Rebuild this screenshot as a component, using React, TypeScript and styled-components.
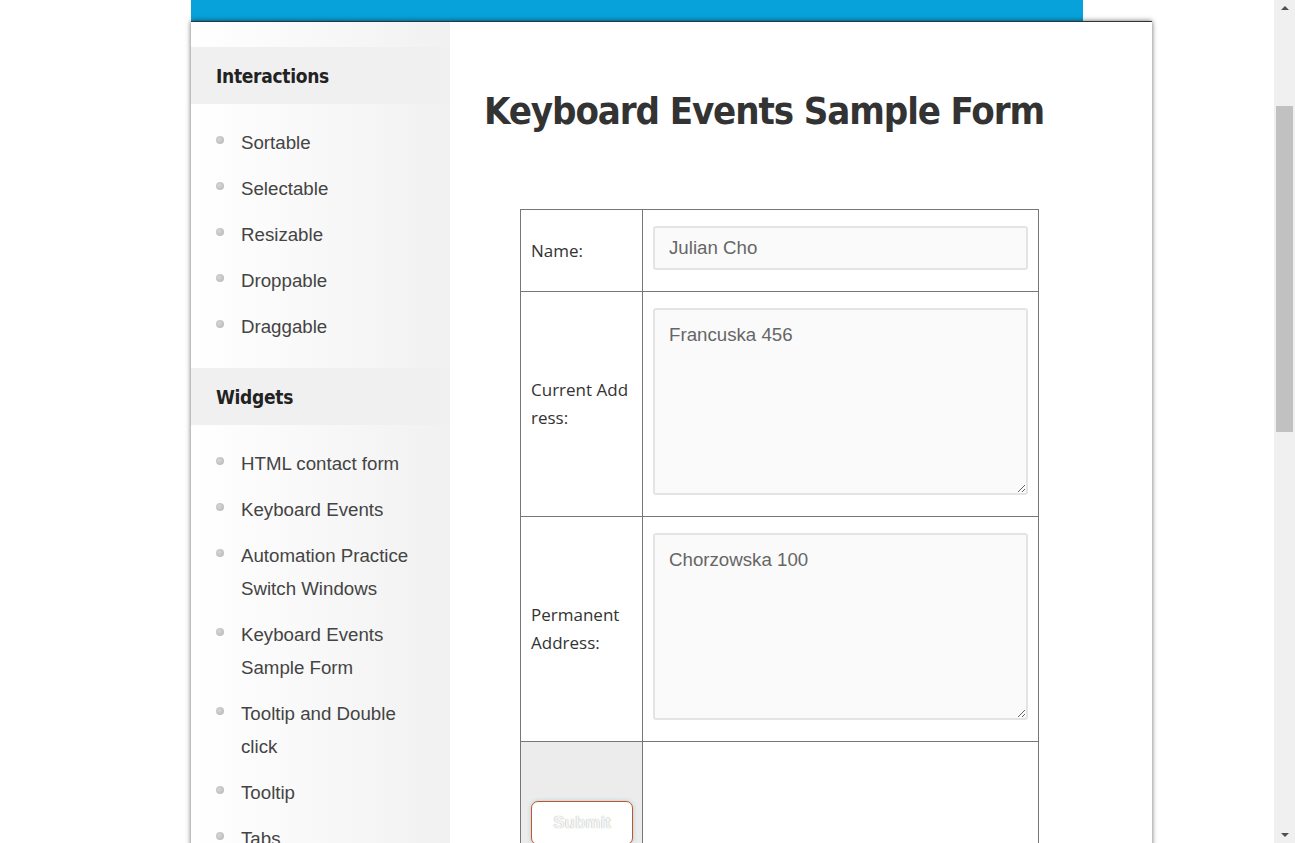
import React from "react";
import styled, { createGlobalStyle } from "styled-components";

const GlobalStyle = createGlobalStyle`
  html, body {
    margin: 0;
    padding: 0;
    height: 843px;
    overflow: hidden;
    background: #fff;
  }
`;

const interactions = ["Sortable", "Selectable", "Resizable", "Droppable", "Draggable"];
const widgets = [
  "HTML contact form",
  "Keyboard Events",
  "Automation Practice Switch Windows",
  "Keyboard Events Sample Form",
  "Tooltip and Double click",
  "Tooltip",
  "Tabs",
];

function SideSection({ title, items }: { title: string; items: string[] }) {
  return (
    <>
      <SideHeading>{title}</SideHeading>
      <SideList>
        {items.map((item) => (
          <SideItem key={item}>{item}</SideItem>
        ))}
      </SideList>
    </>
  );
}

function App() {
  return (
    <Screen>
      <GlobalStyle />
      <Page>
        <Wrapper>
          <TopBar />
          <MainBox>
            <Sidebar>
              <SideSection title="Interactions" items={interactions} />
              <SideSection title="Widgets" items={widgets} />
            </Sidebar>
            <Content>
              <Title>Keyboard Events Sample Form</Title>
              <FormTable>
                <tbody>
                  <Row $h={82}>
                    <LabelCell>Name:</LabelCell>
                    <FieldCell>
                      <TextInput type="text" defaultValue="Julian Cho" />
                    </FieldCell>
                  </Row>
                  <Row $h={225}>
                    <LabelCell>Current Address:</LabelCell>
                    <FieldCell>
                      <TextArea defaultValue="Francuska 456" />
                    </FieldCell>
                  </Row>
                  <Row $h={225}>
                    <LabelCell>Permanent Address:</LabelCell>
                    <FieldCell>
                      <TextArea defaultValue="Chorzowska 100" />
                    </FieldCell>
                  </Row>
                  <Row $h={130}>
                    <ButtonCell>
                      <SubmitButton type="button">Submit</SubmitButton>
                    </ButtonCell>
                    <FieldCell />
                  </Row>
                </tbody>
              </FormTable>
            </Content>
          </MainBox>
        </Wrapper>
      </Page>
      <ScrollBar>
        <Arrow $dir="up" />
        <Track>
          <Thumb />
        </Track>
        <Arrow $dir="down" />
      </ScrollBar>
    </Screen>
  );
}

export default App;

const Screen = styled.div`
  display: flex;
  width: 1295px;
  height: 843px;
  overflow: hidden;
`;

const Page = styled.div`
  flex: 1;
  height: 843px;
  overflow: hidden;
`;

const Wrapper = styled.div`
  margin-left: 191px;
  width: 961px;
`;

const TopBar = styled.div`
  width: 892px;
  height: 21px;
  background: #08a2da;
`;

const MainBox = styled.div`
  display: flex;
  background: #fff;
  border-top: 1px solid #333;
  box-shadow: 0 0 5px rgba(0, 0, 0, 0.6);
  min-height: 900px;
`;

const Sidebar = styled.div`
  width: 259px;
  flex-shrink: 0;
  padding-top: 25px;
  background: linear-gradient(to right, #fff 0%, #f1f1f1 100%);
`;

const headingFont = `
  font-family: "DejaVu Sans", sans-serif;
  font-stretch: condensed;
  font-weight: 700;
`;

const SideHeading = styled.div`
  height: 57px;
  display: flex;
  align-items: center;
  padding-left: 25px;
  background: #f0f0f0;
  color: #222;
  ${headingFont}
  font-size: 19px;
  letter-spacing: -0.3px;
`;

const SideList = styled.ul`
  list-style: none;
  margin: 0;
  padding: 22px 25px 12px 50px;
`;

const SideItem = styled.li`
  position: relative;
  font-family: "Liberation Sans", Arial, sans-serif;
  font-size: 18.7px;
  line-height: 33px;
  color: #444;
  margin-bottom: 13px;

  &::before {
    content: "";
    position: absolute;
    left: -25px;
    top: 10px;
    width: 8px;
    height: 8px;
    border-radius: 50%;
    background: radial-gradient(circle at 40% 40%, #d6d6d6, #b4b4b4);
  }
`;

const Content = styled.div`
  flex: 1;
  padding: 0 0 0 34px;
`;

const Title = styled.h1`
  margin: 64px 0 0;
  ${headingFont}
  font-size: 38px;
  letter-spacing: -1.1px;
  line-height: 50px;
  color: #333;
  white-space: nowrap;
`;

const FormTable = styled.table`
  margin: 73px 0 0 36px;
  width: 519px;
  border-collapse: collapse;
  table-layout: fixed;
`;

const Row = styled.tr<{ $h: number }>`
  height: ${(p) => p.$h}px;
`;

const LabelCell = styled.td`
  width: 101px;
  border: 1px solid #777;
  padding: 10px;
  vertical-align: middle;
  font-family: "Open Sans", sans-serif;
  font-size: 17px;
  line-height: 28px;
  color: #333;
  word-break: break-all;
`;

const FieldCell = styled.td`
  border: 1px solid #777;
  padding: 10px;
  vertical-align: middle;
`;

const ButtonCell = styled(LabelCell)`
  background: #ececec;
  vertical-align: top;
  padding-top: 59px;
`;

const fieldBase = `
  display: block;
  box-sizing: border-box;
  width: 375px;
  background: #fafafa;
  border: 2px solid #e4e4e4;
  border-radius: 3px;
  font-family: "Liberation Sans", Arial, sans-serif;
  font-size: 18.7px;
  color: #666;
  outline: none;
`;

const TextInput = styled.input`
  ${fieldBase}
  height: 44px;
  padding: 0 14px;
  margin-bottom: 6px;
`;

const TextArea = styled.textarea`
  ${fieldBase}
  height: 187px;
  padding: 14px 14px;
  line-height: 22px;
  resize: both;
  margin-bottom: 6px;
`;

const SubmitButton = styled.button`
  display: block;
  width: 102px;
  height: 44px;
  background: #fff;
  border: 1px solid #c4532a;
  border-radius: 7px;
  box-shadow: 0 0 4px rgba(90, 170, 190, 0.45);
  font-family: "Liberation Sans", Arial, sans-serif;
  font-weight: 700;
  font-size: 17px;
  color: #f4f4f4;
  text-shadow: 0 0 1px #9a9a9a;
  padding: 0;
`;

const ScrollBar = styled.div`
  width: 21px;
  height: 843px;
  background: #f0f0f0;
  display: flex;
  flex-direction: column;
  align-items: center;
`;

const Track = styled.div`
  flex: 1;
  width: 100%;
  padding-top: 90px;
  box-sizing: border-box;
  display: flex;
  justify-content: center;
`;

const Thumb = styled.div`
  width: 17px;
  height: 326px;
  background: #c1c1c1;
`;

const Arrow = styled.div<{ $dir: "up" | "down" }>`
  width: 0;
  height: 0;
  margin: 6px 0;
  border-left: 4px solid transparent;
  border-right: 4px solid transparent;
  ${(p) =>
    p.$dir === "up"
      ? "border-bottom: 4px solid #505050;"
      : "border-top: 4px solid #505050;"}
`;
